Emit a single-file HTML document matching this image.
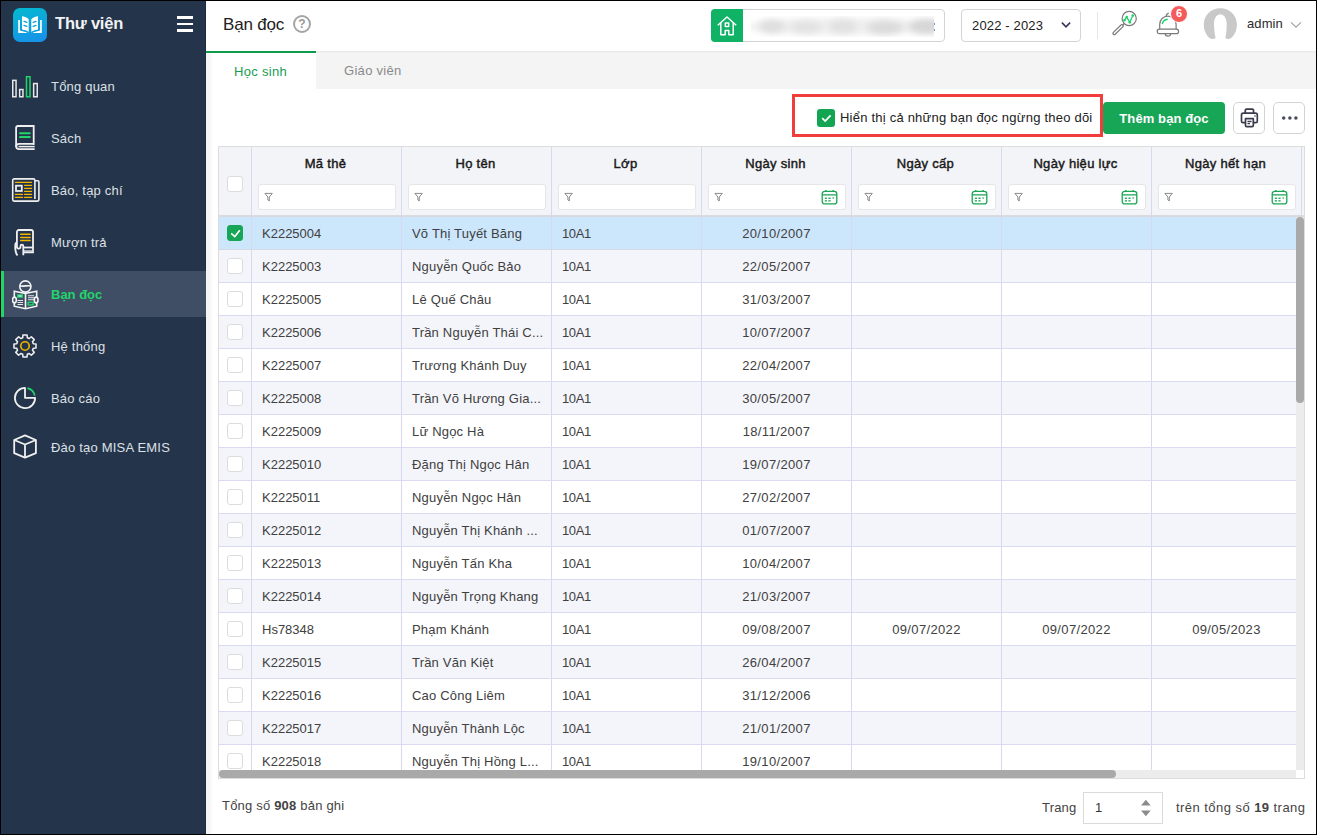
<!DOCTYPE html>
<html><head><meta charset="utf-8">
<style>
*{box-sizing:border-box;margin:0;padding:0}
html,body{width:1317px;height:835px;overflow:hidden;background:#000;font-family:"Liberation Sans",sans-serif;}
#app{position:absolute;left:1px;top:1px;width:1315px;height:833px;background:#fff;overflow:hidden}
.abs{position:absolute}
svg{display:block}
/* sidebar */
#side{position:absolute;left:0;top:0;width:205px;height:833px;background:#24344b;border-right:1px solid #1d2b46}
#shadow{position:absolute;left:205px;top:52px;width:7px;height:783px;background:linear-gradient(90deg,#f6f6f2 0%,#f3f3f3 30%,#fafafa 70%,rgba(255,255,255,0) 100%)}
#logo{position:absolute;left:12px;top:7px;width:34px;height:34px;border-radius:7px;background:linear-gradient(165deg,#03bace 0%,#0ea6dc 45%,#1790ea 100%)}
#brand{position:absolute;left:54px;top:13px;color:#f2f2f2;font-weight:700;font-size:16.5px;letter-spacing:-0.2px}
.ham{position:absolute;left:176px;width:16px;height:2.6px;background:#fff}
.mi{position:absolute;left:0;width:205px;height:46px}
.mi .t{position:absolute;left:50px;top:15px;font-size:13px;color:#dde0e5;white-space:nowrap;letter-spacing:0.2px}
.mi svg{position:absolute;left:10px;top:8px}
.mi.act{background:#3f4e64}
.mi.act:before{content:"";position:absolute;left:0;top:0;width:3px;height:46px;background:#1fd86a}
.mi.act .t{color:#22d46b;font-weight:700;letter-spacing:0;top:16px}
/* header */
#hdr{position:absolute;left:205px;top:0;width:1110px;height:50px;background:#fff}
#title{position:absolute;left:17px;top:14px;font-size:17px;color:#212121;letter-spacing:-0.2px}
#help{position:absolute;left:87px;top:14px;width:18px;height:18px;border:2px solid #a5a5a5;border-radius:50%;color:#999;font-size:12px;font-weight:700;text-align:center;line-height:14px}
#school{position:absolute;left:505px;top:8px;width:234px;height:33px;border:1px solid #d4d4d4;border-radius:4px;background:#fff}
#school .g{position:absolute;left:-1px;top:-1px;width:32px;height:33px;background:#10b266;border-radius:4px 0 0 4px}
#school .blurwrap{position:absolute;left:39px;top:6px;width:183px;height:21px;overflow:hidden}
#school .blurwrap i{position:absolute;display:block;background:#dedede;border-radius:50%;filter:blur(3px)}
#year{position:absolute;left:755px;top:8px;width:120px;height:33px;border:1px solid #d4d4d4;border-radius:4px;font-size:13px;color:#212121}
#year span{position:absolute;left:10px;top:8px;letter-spacing:0.15px}
#divd{position:absolute;left:891px;top:11px;width:1px;height:27px;background:#e6e6e6}
/* tabs */
#tabs{position:absolute;left:205px;top:50px;width:1110px;height:38px;background:#f4f4f4;box-shadow:inset 0 2px 2px -1px rgba(0,0,0,0.06)}
#tabAct{position:absolute;left:0;top:0;width:110px;height:38px;background:#fff;border-top:2px solid #0d9a4a}
#tabAct span{position:absolute;left:28px;top:11px;font-size:13px;color:#189c54;letter-spacing:0.3px}
#tabG{position:absolute;left:138px;top:12px;font-size:13px;color:#8a8a8a;letter-spacing:0.3px}
/* toolbar */
#redbox{position:absolute;left:791px;top:93px;width:311px;height:43px;border:3px solid #f23d3d}
#chk{position:absolute;left:816px;top:108px;width:18px;height:18px;background:#14a552;border-radius:3px}
#chkT{position:absolute;left:839px;top:109px;font-size:13px;color:#222;letter-spacing:0.22px;white-space:nowrap}
#addBtn{position:absolute;left:1102px;top:101px;width:122px;height:32px;background:#17a556;border-radius:4px;color:#fff;font-weight:700;font-size:13px;text-align:center;line-height:33px;letter-spacing:0.1px}
.ibtn{position:absolute;top:101px;width:32px;height:32px;border:1px solid #d3d3d3;border-radius:5px;background:#fff}
/* table */
#tbl{position:absolute;left:217px;top:145px;width:1087px;height:633px;border:1px solid #dcdcdc;overflow:hidden;background:#fff}
.th{position:absolute;top:0;height:68px;background:#f3f4f8;border-right:1px solid #d8d8ee}
.th .h{position:absolute;left:0;right:2px;top:9px;text-align:center;font-weight:400;font-size:13px;color:#1a1a1a;letter-spacing:0.3px;-webkit-text-stroke:0.45px #1a1a1a}
.th .f{position:absolute;left:6px;right:5px;top:37px;height:26px;background:#fff;border:1px solid #e6e6ea;border-radius:3px}
.th .f svg{position:absolute;left:5px;top:7px}
.th .f .cal{position:absolute;right:7px;left:auto;top:4px}
#hline{position:absolute;left:0;top:68px;width:1085px;height:2px;background:#d9d9e0}
.row{position:absolute;left:0;width:1085px;height:33px;border-bottom:1px solid #dadaf0}
.row.odd{background:#f4f5fa}
.row.sel{background:#cce6fc;border-bottom-color:#d2d9e3}
.c{position:absolute;top:0;height:32px;border-right:1px solid #d8d8ee;font-size:13px;color:#404040;line-height:34px;white-space:nowrap;overflow:hidden;letter-spacing:0.2px}
.c.code{letter-spacing:0}
.c.dt{letter-spacing:0.35px}
.cb{position:absolute;left:8px;top:8px;width:16px;height:16px;border:1px solid #dcdcdc;border-radius:3px;background:#fff}
.cb.on{background:#17a556;border-color:#17a556}
.ctr{text-align:center}
#vscroll{position:absolute;left:1077px;top:70px;width:8px;height:553px;background:#ececec}
#vthumb{position:absolute;left:1077px;top:70px;width:8px;height:186px;background:#a9a9a9;border-radius:4px}
#hscroll{position:absolute;left:0;top:623px;width:1077px;height:8px;background:#ececec}
#hthumb{position:absolute;left:0;top:623px;width:897px;height:8px;background:#a9a9a9;border-radius:4px}
#corner{position:absolute;left:1077px;top:623px;width:8px;height:8px;background:#fff}
/* footer */
#total{position:absolute;left:221px;top:797px;font-size:13px;color:#444;letter-spacing:0.2px}
#pg1{position:absolute;left:1041px;top:799px;font-size:13px;color:#444;letter-spacing:0.2px}
#pgInput{position:absolute;left:1082px;top:791px;width:80px;height:32px;border:1px solid #dadada;background:#fff}
#pgInput span{position:absolute;left:11px;top:7px;font-size:13px;color:#333}
#pg2{position:absolute;left:1175px;top:799px;font-size:13px;color:#444;letter-spacing:0.45px}
</style></head>
<body><div id="app">
<div id="side">
  <div id="logo">
    <svg width="34" height="34" viewBox="0 0 34 34"><g fill="#fff">
      <path d="M5.2 12 H6.9 V22.6 L15.7 23.9 V24.9 H5.2z"/>
      <path d="M28.8 12 H27.1 V22.6 L18.3 23.9 V24.9 H28.8z"/>
      <path d="M9 8.2 C11.5 8.5 14 9.5 15.7 11.2 V24 C14 22.6 11.5 21.8 9 21.7z"/>
      <path d="M25 8.2 C22.5 8.5 20 9.5 18.3 11.2 V24 C20 22.6 22.5 21.8 25 21.7z"/>
    </g><g stroke="#0b9fdb" stroke-width="1.25" stroke-linecap="round" fill="none">
      <path d="M7.6 20.2 Q7.7 22.4 10 22.6 Q13.3 23 15.3 24.8 M26.4 20.2 Q26.3 22.4 24 22.6 Q20.7 23 18.7 24.8"/>
      <path d="M11 13.4 l2.9 1 M11 17.4 l2.9 1 M23 13.4 l-2.9 1 M23 17.4 l-2.9 1"/></g></svg>
  </div>
  <div class="abs" style="left:200px;top:0;width:1px;height:833px;background:#283049"></div>
  <div id="brand">Thư viện</div>
  <div class="ham" style="top:15px"></div>
  <div class="ham" style="top:21.7px"></div>
  <div class="ham" style="top:28.3px"></div>

  <div class="mi" style="top:63px"><svg width="30" height="30" viewBox="0 0 30 30"><g fill="none" stroke-width="1.5"><rect x="1.75" y="8.35" width="3.3" height="16.4" stroke="#e8e8e8"/><rect x="8.65" y="17.55" width="3.3" height="7.2" stroke="#e8e8e8"/><rect x="15.5" y="4.75" width="3.5" height="20" stroke="#22d36b"/><rect x="22.65" y="11.55" width="3.6" height="13.2" stroke="#e8e8e8"/></g></svg><span class="t">Tổng quan</span></div>

  <div class="mi" style="top:115px"><svg width="30" height="30" viewBox="0 0 30 30"><g fill="none" stroke="#f0f0f0" stroke-width="1.8"><path d="M22.7 21 V2 H7.1 Q5.1 2 5.1 4 V22 Q5.1 25.1 8.2 25.1 H23.7"/><path d="M5.1 23 Q5.1 19.9 8.2 19.9 H22.7"/><path d="M7.5 22.6 H23.7" stroke-width="1.5"/></g><path d="M9 9.2 H18.8 M9 13 H18.8" stroke="#22d36b" stroke-width="2" stroke-linecap="round"/></svg><span class="t">Sách</span></div>

  <div class="mi" style="top:167px"><svg width="30" height="30" viewBox="0 0 30 30"><g fill="none" stroke="#eee" stroke-width="1.6"><path d="M23.9 23 V4.4 a1.5 1.5 0 0 0 -1.5 -1.5 H3.2 a1.5 1.5 0 0 0 -1.5 1.5 V23.6 a1.5 1.5 0 0 0 1.5 1.5 H26.4 a1.5 1.5 0 0 0 1.5 -1.5 V5.8 a1 1 0 0 0 -1 -1 H23.9"/><rect x="5" y="9.7" width="5.8" height="5.3" stroke-width="1.8"/></g><path d="M4.4 6.3 H20.5 M13.6 9.4 H20.5 M13.6 12.4 H20.5 M13.6 15.4 H20.5 M13.6 18.4 H20.5 M13.6 21.4 H20.5 M4.4 18.4 H11.4 M4.4 21.4 H11.4" stroke="#f2b600" stroke-width="1.3" stroke-linecap="round"/></svg><span class="t">Báo, tạp chí</span></div>

  <div class="mi" style="top:219px"><svg width="30" height="30" viewBox="0 0 30 30"><g fill="none" stroke="#f0f0f0" stroke-width="1.8"><path d="M5.9 15 V4 a2 2 0 0 1 2-2 H20 a2 2 0 0 1 2 2 V24.4 H12.3"/><path d="M12.3 19.5 H22"/><path d="M12.3 23 H22" stroke="#cfd2d8" stroke-width="1.6"/><path d="M5 14.5 Q3.8 16.5 4.4 22 Q4.9 25.5 6.5 27.5"/><path d="M5.9 15 V18.8 a1.8 1.8 0 0 0 3.6 0 V18 a1.4 1.4 0 0 1 2.8 0 V27.2"/></g><path d="M9.7 6.3 H19.1 M9.7 9.5 H19.1 M9.7 12.5 H19.1" stroke="#f2b600" stroke-width="1.6" stroke-linecap="round"/></svg><span class="t">Mượn trả</span></div>

  <div class="mi act" style="top:270px"><svg width="30" height="32" viewBox="0 0 30 32" style="top:7px;left:11px"><g fill="none" stroke="#f4f4f4" stroke-width="1.6"><circle cx="13.35" cy="8.5" r="5.6"/><path d="M7.9 7.6 C10.5 9.2 16 6.8 18.9 8"/><path d="M2.3 13.3 L13.5 15.5 L24.7 13.3 V28.2 L13.5 30.8 L2.3 28.2z" fill="#3f4e64"/><path d="M13.5 15.5 V30.8"/><ellipse cx="2.45" cy="22" rx="1.9" ry="2.9" fill="#3f4e64"/><ellipse cx="24.15" cy="22" rx="1.9" ry="2.9" fill="#3f4e64"/></g><rect x="5" y="16.3" width="6" height="3.4" fill="#22d36b"/><path d="M6.5 18 H9.5" stroke="#fff" stroke-width="0.9"/><rect x="16.2" y="24.3" width="5" height="2.6" fill="none" stroke="#22d36b" stroke-width="1.4"/><path d="M5.5 22.5 H11 M5.5 24.5 H11 M5.5 26.5 H11 M16 17.7 H22 M16 19.7 H22 M16 21.7 H22" stroke="#e6e6e6" stroke-width="1.1"/></svg><span class="t">Bạn đọc</span></div>

  <div class="mi" style="top:323px"><svg width="30" height="30" viewBox="0 0 30 30"><path fill="none" stroke="#f0f0f0" stroke-width="1.55" stroke-linejoin="round" d="M11.70 5.71 L11.96 2.99 L16.04 2.99 L16.30 5.71 L18.23 6.51 L20.34 4.77 L23.23 7.66 L21.49 9.77 L22.29 11.70 L25.01 11.96 L25.01 16.04 L22.29 16.30 L21.49 18.23 L23.23 20.34 L20.34 23.23 L18.23 21.49 L16.30 22.29 L16.04 25.01 L11.96 25.01 L11.70 22.29 L9.77 21.49 L7.66 23.23 L4.77 20.34 L6.51 18.23 L5.71 16.30 L2.99 16.04 L2.99 11.96 L5.71 11.70 L6.51 9.77 L4.77 7.66 L7.66 4.77 L9.77 6.51Z"/><circle cx="14" cy="14" r="4.2" fill="none" stroke="#f2b600" stroke-width="1.6"/></svg><span class="t">Hệ thống</span></div>

  <div class="mi" style="top:375px"><svg width="30" height="30" viewBox="0 0 30 30"><path fill="none" stroke="#f0f0f0" stroke-width="1.8" stroke-linejoin="round" d="M14 3.9 V13.8 H24.1 A10.1 10.1 0 1 1 14 3.9z"/><path fill="none" stroke="#22d36b" stroke-width="1.8" d="M16.4 4.2 A10 10 0 0 1 23.8 11.6"/></svg><span class="t">Báo cáo</span></div>

  <div class="mi" style="top:424px"><svg width="30" height="30" viewBox="0 0 30 30"><g fill="none" stroke="#f0f0f0" stroke-width="1.8" stroke-linejoin="round"><path d="M14 2.4 L24.9 7 V20.2 L14 24.6 L3.2 20.2 V7z"/><path d="M3.2 7 L14 11.5 L24.9 7 M14 11.5 V24.6"/></g></svg><span class="t">Đào tạo MISA EMIS</span></div>
</div>

<div id="hdr">
  <div id="title">Bạn đọc</div>
  <div id="help">?</div>
  <div id="school"><div class="g"><svg width="32" height="33" viewBox="0 0 32 33"><g fill="none" stroke="#fff" stroke-width="1.5" stroke-linejoin="round"><path d="M6.8 16.3 L16 8 L25.2 16.3"/><path d="M9.8 13.8 V25.8 H14.2 V21.5 H17.8 V25.8 H22.2 V13.8"/><rect x="14.3" y="14" width="3.4" height="3.4"/></g></svg></div>
    <div class="blurwrap"><i style="left:-6px;top:2px;width:200px;height:17px;background:#efefef"></i><i style="left:8px;top:4px;width:26px;height:13px"></i><i style="left:40px;top:5px;width:30px;height:12px;background:#e2e2e2"></i><i style="left:78px;top:4px;width:28px;height:13px;background:#e0e0e0"></i><i style="left:116px;top:5px;width:36px;height:13px;background:#dadada"></i><i style="left:158px;top:3px;width:36px;height:15px;background:#d6d6d6"></i></div>
    <div class="abs" style="left:222px;top:13px;width:1px;height:2px;background:#5a9fe6"></div><div class="abs" style="left:222px;top:19px;width:1px;height:2px;background:#5a9fe6"></div>
  </div>
  <div id="year"><span>2022 - 2023</span><svg class="abs" style="left:99px;top:11px" width="11" height="9" viewBox="0 0 11 9"><path d="M0.9 1.6 L5 5.8 L9.1 1.6" fill="none" stroke="#35365a" stroke-width="1.6"/></svg></div>
  <div id="divd"></div>
  <svg class="abs" style="left:906px;top:9px" width="30" height="28" viewBox="0 0 30 28"><circle cx="17.2" cy="8.5" r="7.1" fill="#fff" stroke="#7a7a7a" stroke-width="1.2"/><path d="M12.2 13.5 L10.6 15.1" stroke="#7a7a7a" stroke-width="1.3"/><path d="M2.3 23.3 L9.9 15.9" stroke="#7a7a7a" stroke-width="3.8" stroke-linecap="round"/><path d="M2.3 23.3 L9.9 15.9" stroke="#fff" stroke-width="1.4" stroke-linecap="round"/><path d="M12.4 10.2 L14.7 7.1 L17.8 12.3 L20.8 5.5" fill="none" stroke="#1ed26a" stroke-width="1.3"/><g fill="#1ed26a"><circle cx="12.4" cy="10.2" r="1.3"/><circle cx="14.7" cy="7.1" r="1.3"/><circle cx="17.8" cy="12.3" r="1.3"/><circle cx="20.8" cy="5.5" r="1.3"/></g></svg>
  <svg class="abs" style="left:950px;top:9px" width="26" height="30" viewBox="0 0 26 30"><g fill="none" stroke="#7a7a7a" stroke-width="1.2"><path d="M10.2 6.2 C10.2 4.6 11.2 3.2 12.8 3.4"/><path d="M3.7 19.3 V14.3 A8.2 8.2 0 0 1 20.1 14.3 V19.3"/><rect x="1.2" y="19.2" width="21.4" height="4.4" rx="2.2" fill="#fff"/><path d="M9.2 23.8 a2.75 2.3 0 0 0 5.5 0"/></g><path d="M6.2 14 A6.5 6.5 0 0 1 11.7 9.2" fill="none" stroke="#1ed26a" stroke-width="1.4"/></svg>
  <div class="abs" style="left:964px;top:4px;width:18px;height:18px;border-radius:50%;background:#f55b5b;border:1.5px solid #fff;color:#fff;font-size:11px;font-weight:700;text-align:center;line-height:15px">6</div>
  <svg class="abs" style="left:997px;top:7px" width="35" height="32" viewBox="0 0 35 32"><path fill="#c9c9c9" d="M6.5 30 C3 27 0.8 22 0.8 16.5 C0.8 7.5 8 0.3 17.35 0.3 C26.7 0.3 33.9 7.5 33.9 16.5 C33.9 22 31.7 27 28.2 30 Q25 31.8 22.3 30 C23 27 23.7 22 23.7 16 C23.7 10 20.8 6.3 17.35 6.3 C13.9 6.3 11 10 11 16 C11 22 12 27 12.6 30 Q9.5 31.8 6.5 30 Z"/></svg>
  <div class="abs" style="left:1041px;top:15px;font-size:13px;color:#2a2a2a;letter-spacing:0.1px">admin</div>
  <svg class="abs" style="left:1084px;top:20px" width="12" height="8" viewBox="0 0 12 8"><path d="M1 1.3 L6 6.2 L11 1.3" fill="none" stroke="#a0a0a0" stroke-width="1.1"/></svg>
</div>

<div id="tabs">
  <div id="tabAct"><span>Học sinh</span></div>
  <div id="tabG">Giáo viên</div>
</div>

<div id="shadow"></div>
<div id="redbox"></div>
<div id="chk"><svg width="18" height="18" viewBox="0 0 18 18"><path d="M5.2 9.2 L8.2 12 L13.6 6.3" fill="none" stroke="#fff" stroke-width="1.7"/></svg></div>
<div id="chkT">Hiển thị cả những bạn đọc ngừng theo dõi</div>
<div id="addBtn">Thêm bạn đọc</div>
<div class="ibtn" style="left:1232px"><svg width="30" height="30" viewBox="0 0 30 30"><g transform="translate(0,-1.3)"><g fill="none" stroke="#3a3b4d" stroke-width="1.7" stroke-linejoin="round"><path d="M11.3 11.5 V8.6 a1.2 1.2 0 0 1 1.2 -1.2 H18.3 a1.2 1.2 0 0 1 1.2 1.2 V11.5"/><path d="M11 21 H9 a1.5 1.5 0 0 1 -1.5 -1.5 V13.3 a1.8 1.8 0 0 1 1.8 -1.8 H21.5 a1.8 1.8 0 0 1 1.8 1.8 V19.5 a1.5 1.5 0 0 1 -1.5 1.5 H19.8"/><path d="M11.5 17 H19.3 V23.8 a1.2 1.2 0 0 1 -1.2 1.2 H12.7 a1.2 1.2 0 0 1 -1.2 -1.2z"/></g><path d="M13.5 19.8 H17.5 M13.5 22 H16" stroke="#3a3b4d" stroke-width="1.3"/><circle cx="21" cy="14.3" r="0.8" fill="#3a3b4d"/></g></svg></div>
<div class="ibtn" style="left:1272px"><svg width="30" height="30" viewBox="0 0 30 30"><g fill="#484a5e"><circle cx="9.7" cy="15" r="1.75"/><circle cx="15.9" cy="15" r="1.75"/><circle cx="21.9" cy="15" r="1.75"/></g></svg></div>

<div id="tbl">
  <div id="THEAD"><div class="th" style="left:0;width:33px"><div class="cb" style="top:29px;left:8px"></div></div>
<div class="th" style="left:33px;width:150px"><div class="h">Mã thẻ</div><div class="f"><svg width="10" height="10" viewBox="0 0 10 10"><path d="M0.9 1.4 H8.3 L5.3 5 V8.9 L3.9 8 V5z" fill="none" stroke="#8a8a8a" stroke-width="1" stroke-linejoin="round"/></svg></div></div>
<div class="th" style="left:183px;width:150px"><div class="h">Họ tên</div><div class="f"><svg width="10" height="10" viewBox="0 0 10 10"><path d="M0.9 1.4 H8.3 L5.3 5 V8.9 L3.9 8 V5z" fill="none" stroke="#8a8a8a" stroke-width="1" stroke-linejoin="round"/></svg></div></div>
<div class="th" style="left:333px;width:150px"><div class="h">Lớp</div><div class="f"><svg width="10" height="10" viewBox="0 0 10 10"><path d="M0.9 1.4 H8.3 L5.3 5 V8.9 L3.9 8 V5z" fill="none" stroke="#8a8a8a" stroke-width="1" stroke-linejoin="round"/></svg></div></div>
<div class="th" style="left:483px;width:150px"><div class="h">Ngày sinh</div><div class="f"><svg width="10" height="10" viewBox="0 0 10 10"><path d="M0.9 1.4 H8.3 L5.3 5 V8.9 L3.9 8 V5z" fill="none" stroke="#8a8a8a" stroke-width="1" stroke-linejoin="round"/></svg><svg class="cal" width="17" height="16" viewBox="0 0 17 16"><g fill="none" stroke="#19a554" stroke-width="1.3"><rect x="1.2" y="2.3" width="14.6" height="12.6" rx="2.5"/><path d="M1.2 5.8 H15.8 M4.8 1 V3 M12.2 1 V3"/></g><g fill="#19a554"><rect x="3.8" y="8.6" width="2.2" height="1.3"/><rect x="7.4" y="8.6" width="2.2" height="1.3"/><rect x="3.8" y="11.2" width="2.2" height="1.3"/><rect x="7.4" y="11.2" width="2.2" height="1.3"/><path d="M11 8.6 H13.4 L12.2 9.9z"/></g></svg></div></div>
<div class="th" style="left:633px;width:150px"><div class="h">Ngày cấp</div><div class="f"><svg width="10" height="10" viewBox="0 0 10 10"><path d="M0.9 1.4 H8.3 L5.3 5 V8.9 L3.9 8 V5z" fill="none" stroke="#8a8a8a" stroke-width="1" stroke-linejoin="round"/></svg><svg class="cal" width="17" height="16" viewBox="0 0 17 16"><g fill="none" stroke="#19a554" stroke-width="1.3"><rect x="1.2" y="2.3" width="14.6" height="12.6" rx="2.5"/><path d="M1.2 5.8 H15.8 M4.8 1 V3 M12.2 1 V3"/></g><g fill="#19a554"><rect x="3.8" y="8.6" width="2.2" height="1.3"/><rect x="7.4" y="8.6" width="2.2" height="1.3"/><rect x="3.8" y="11.2" width="2.2" height="1.3"/><rect x="7.4" y="11.2" width="2.2" height="1.3"/><path d="M11 8.6 H13.4 L12.2 9.9z"/></g></svg></div></div>
<div class="th" style="left:783px;width:150px"><div class="h">Ngày hiệu lực</div><div class="f"><svg width="10" height="10" viewBox="0 0 10 10"><path d="M0.9 1.4 H8.3 L5.3 5 V8.9 L3.9 8 V5z" fill="none" stroke="#8a8a8a" stroke-width="1" stroke-linejoin="round"/></svg><svg class="cal" width="17" height="16" viewBox="0 0 17 16"><g fill="none" stroke="#19a554" stroke-width="1.3"><rect x="1.2" y="2.3" width="14.6" height="12.6" rx="2.5"/><path d="M1.2 5.8 H15.8 M4.8 1 V3 M12.2 1 V3"/></g><g fill="#19a554"><rect x="3.8" y="8.6" width="2.2" height="1.3"/><rect x="7.4" y="8.6" width="2.2" height="1.3"/><rect x="3.8" y="11.2" width="2.2" height="1.3"/><rect x="7.4" y="11.2" width="2.2" height="1.3"/><path d="M11 8.6 H13.4 L12.2 9.9z"/></g></svg></div></div>
<div class="th" style="left:933px;width:150px"><div class="h">Ngày hết hạn</div><div class="f"><svg width="10" height="10" viewBox="0 0 10 10"><path d="M0.9 1.4 H8.3 L5.3 5 V8.9 L3.9 8 V5z" fill="none" stroke="#8a8a8a" stroke-width="1" stroke-linejoin="round"/></svg><svg class="cal" width="17" height="16" viewBox="0 0 17 16"><g fill="none" stroke="#19a554" stroke-width="1.3"><rect x="1.2" y="2.3" width="14.6" height="12.6" rx="2.5"/><path d="M1.2 5.8 H15.8 M4.8 1 V3 M12.2 1 V3"/></g><g fill="#19a554"><rect x="3.8" y="8.6" width="2.2" height="1.3"/><rect x="7.4" y="8.6" width="2.2" height="1.3"/><rect x="3.8" y="11.2" width="2.2" height="1.3"/><rect x="7.4" y="11.2" width="2.2" height="1.3"/><path d="M11 8.6 H13.4 L12.2 9.9z"/></g></svg></div></div>
<div class="th" style="left:1083px;width:2px;border:0"></div>
<div id="hline"></div></div><!--/THEAD-->
  <div id="TBODY"><div class="row sel" style="top:70px"><div class="c" style="left:0;width:33px"><div class="cb on"><svg width="14" height="14" viewBox="0 0 14 14" style="position:absolute;left:0;top:0"><path d="M3.2 7.4 L6.8 10.6 L11.8 4.3" fill="none" stroke="#fff" stroke-width="1.6"/></svg></div></div><div class="c code" style="left:33px;width:150px;padding-left:10px">K2225004</div><div class="c" style="left:183px;width:150px;padding-left:10px">Võ Thị Tuyết Băng</div><div class="c" style="left:333px;width:150px;padding-left:10px;letter-spacing:-0.4px">10A1</div><div class="c ctr dt" style="left:483px;width:150px">20/10/2007</div><div class="c ctr dt" style="left:633px;width:150px"></div><div class="c ctr dt" style="left:783px;width:150px"></div><div class="c ctr dt" style="left:933px;width:150px"></div></div>
<div class="row odd" style="top:103px"><div class="c" style="left:0;width:33px"><div class="cb"></div></div><div class="c code" style="left:33px;width:150px;padding-left:10px">K2225003</div><div class="c" style="left:183px;width:150px;padding-left:10px">Nguyễn Quốc Bảo</div><div class="c" style="left:333px;width:150px;padding-left:10px;letter-spacing:-0.4px">10A1</div><div class="c ctr dt" style="left:483px;width:150px">22/05/2007</div><div class="c ctr dt" style="left:633px;width:150px"></div><div class="c ctr dt" style="left:783px;width:150px"></div><div class="c ctr dt" style="left:933px;width:150px"></div></div>
<div class="row" style="top:136px"><div class="c" style="left:0;width:33px"><div class="cb"></div></div><div class="c code" style="left:33px;width:150px;padding-left:10px">K2225005</div><div class="c" style="left:183px;width:150px;padding-left:10px">Lê Quế Châu</div><div class="c" style="left:333px;width:150px;padding-left:10px;letter-spacing:-0.4px">10A1</div><div class="c ctr dt" style="left:483px;width:150px">31/03/2007</div><div class="c ctr dt" style="left:633px;width:150px"></div><div class="c ctr dt" style="left:783px;width:150px"></div><div class="c ctr dt" style="left:933px;width:150px"></div></div>
<div class="row odd" style="top:169px"><div class="c" style="left:0;width:33px"><div class="cb"></div></div><div class="c code" style="left:33px;width:150px;padding-left:10px">K2225006</div><div class="c" style="left:183px;width:150px;padding-left:10px">Trần Nguyễn Thái C...</div><div class="c" style="left:333px;width:150px;padding-left:10px;letter-spacing:-0.4px">10A1</div><div class="c ctr dt" style="left:483px;width:150px">10/07/2007</div><div class="c ctr dt" style="left:633px;width:150px"></div><div class="c ctr dt" style="left:783px;width:150px"></div><div class="c ctr dt" style="left:933px;width:150px"></div></div>
<div class="row" style="top:202px"><div class="c" style="left:0;width:33px"><div class="cb"></div></div><div class="c code" style="left:33px;width:150px;padding-left:10px">K2225007</div><div class="c" style="left:183px;width:150px;padding-left:10px">Trương Khánh Duy</div><div class="c" style="left:333px;width:150px;padding-left:10px;letter-spacing:-0.4px">10A1</div><div class="c ctr dt" style="left:483px;width:150px">22/04/2007</div><div class="c ctr dt" style="left:633px;width:150px"></div><div class="c ctr dt" style="left:783px;width:150px"></div><div class="c ctr dt" style="left:933px;width:150px"></div></div>
<div class="row odd" style="top:235px"><div class="c" style="left:0;width:33px"><div class="cb"></div></div><div class="c code" style="left:33px;width:150px;padding-left:10px">K2225008</div><div class="c" style="left:183px;width:150px;padding-left:10px">Trần Võ Hương Gia...</div><div class="c" style="left:333px;width:150px;padding-left:10px;letter-spacing:-0.4px">10A1</div><div class="c ctr dt" style="left:483px;width:150px">30/05/2007</div><div class="c ctr dt" style="left:633px;width:150px"></div><div class="c ctr dt" style="left:783px;width:150px"></div><div class="c ctr dt" style="left:933px;width:150px"></div></div>
<div class="row" style="top:268px"><div class="c" style="left:0;width:33px"><div class="cb"></div></div><div class="c code" style="left:33px;width:150px;padding-left:10px">K2225009</div><div class="c" style="left:183px;width:150px;padding-left:10px">Lữ Ngọc Hà</div><div class="c" style="left:333px;width:150px;padding-left:10px;letter-spacing:-0.4px">10A1</div><div class="c ctr dt" style="left:483px;width:150px">18/11/2007</div><div class="c ctr dt" style="left:633px;width:150px"></div><div class="c ctr dt" style="left:783px;width:150px"></div><div class="c ctr dt" style="left:933px;width:150px"></div></div>
<div class="row odd" style="top:301px"><div class="c" style="left:0;width:33px"><div class="cb"></div></div><div class="c code" style="left:33px;width:150px;padding-left:10px">K2225010</div><div class="c" style="left:183px;width:150px;padding-left:10px">Đặng Thị Ngọc Hân</div><div class="c" style="left:333px;width:150px;padding-left:10px;letter-spacing:-0.4px">10A1</div><div class="c ctr dt" style="left:483px;width:150px">19/07/2007</div><div class="c ctr dt" style="left:633px;width:150px"></div><div class="c ctr dt" style="left:783px;width:150px"></div><div class="c ctr dt" style="left:933px;width:150px"></div></div>
<div class="row" style="top:334px"><div class="c" style="left:0;width:33px"><div class="cb"></div></div><div class="c code" style="left:33px;width:150px;padding-left:10px">K2225011</div><div class="c" style="left:183px;width:150px;padding-left:10px">Nguyễn Ngọc Hân</div><div class="c" style="left:333px;width:150px;padding-left:10px;letter-spacing:-0.4px">10A1</div><div class="c ctr dt" style="left:483px;width:150px">27/02/2007</div><div class="c ctr dt" style="left:633px;width:150px"></div><div class="c ctr dt" style="left:783px;width:150px"></div><div class="c ctr dt" style="left:933px;width:150px"></div></div>
<div class="row odd" style="top:367px"><div class="c" style="left:0;width:33px"><div class="cb"></div></div><div class="c code" style="left:33px;width:150px;padding-left:10px">K2225012</div><div class="c" style="left:183px;width:150px;padding-left:10px">Nguyễn Thị Khánh ...</div><div class="c" style="left:333px;width:150px;padding-left:10px;letter-spacing:-0.4px">10A1</div><div class="c ctr dt" style="left:483px;width:150px">01/07/2007</div><div class="c ctr dt" style="left:633px;width:150px"></div><div class="c ctr dt" style="left:783px;width:150px"></div><div class="c ctr dt" style="left:933px;width:150px"></div></div>
<div class="row" style="top:400px"><div class="c" style="left:0;width:33px"><div class="cb"></div></div><div class="c code" style="left:33px;width:150px;padding-left:10px">K2225013</div><div class="c" style="left:183px;width:150px;padding-left:10px">Nguyễn Tấn Kha</div><div class="c" style="left:333px;width:150px;padding-left:10px;letter-spacing:-0.4px">10A1</div><div class="c ctr dt" style="left:483px;width:150px">10/04/2007</div><div class="c ctr dt" style="left:633px;width:150px"></div><div class="c ctr dt" style="left:783px;width:150px"></div><div class="c ctr dt" style="left:933px;width:150px"></div></div>
<div class="row odd" style="top:433px"><div class="c" style="left:0;width:33px"><div class="cb"></div></div><div class="c code" style="left:33px;width:150px;padding-left:10px">K2225014</div><div class="c" style="left:183px;width:150px;padding-left:10px">Nguyễn Trọng Khang</div><div class="c" style="left:333px;width:150px;padding-left:10px;letter-spacing:-0.4px">10A1</div><div class="c ctr dt" style="left:483px;width:150px">21/03/2007</div><div class="c ctr dt" style="left:633px;width:150px"></div><div class="c ctr dt" style="left:783px;width:150px"></div><div class="c ctr dt" style="left:933px;width:150px"></div></div>
<div class="row" style="top:466px"><div class="c" style="left:0;width:33px"><div class="cb"></div></div><div class="c code" style="left:33px;width:150px;padding-left:10px">Hs78348</div><div class="c" style="left:183px;width:150px;padding-left:10px">Phạm Khánh</div><div class="c" style="left:333px;width:150px;padding-left:10px;letter-spacing:-0.4px">10A1</div><div class="c ctr dt" style="left:483px;width:150px">09/08/2007</div><div class="c ctr dt" style="left:633px;width:150px">09/07/2022</div><div class="c ctr dt" style="left:783px;width:150px">09/07/2022</div><div class="c ctr dt" style="left:933px;width:150px">09/05/2023</div></div>
<div class="row odd" style="top:499px"><div class="c" style="left:0;width:33px"><div class="cb"></div></div><div class="c code" style="left:33px;width:150px;padding-left:10px">K2225015</div><div class="c" style="left:183px;width:150px;padding-left:10px">Trần Văn Kiệt</div><div class="c" style="left:333px;width:150px;padding-left:10px;letter-spacing:-0.4px">10A1</div><div class="c ctr dt" style="left:483px;width:150px">26/04/2007</div><div class="c ctr dt" style="left:633px;width:150px"></div><div class="c ctr dt" style="left:783px;width:150px"></div><div class="c ctr dt" style="left:933px;width:150px"></div></div>
<div class="row" style="top:532px"><div class="c" style="left:0;width:33px"><div class="cb"></div></div><div class="c code" style="left:33px;width:150px;padding-left:10px">K2225016</div><div class="c" style="left:183px;width:150px;padding-left:10px">Cao Công Liêm</div><div class="c" style="left:333px;width:150px;padding-left:10px;letter-spacing:-0.4px">10A1</div><div class="c ctr dt" style="left:483px;width:150px">31/12/2006</div><div class="c ctr dt" style="left:633px;width:150px"></div><div class="c ctr dt" style="left:783px;width:150px"></div><div class="c ctr dt" style="left:933px;width:150px"></div></div>
<div class="row odd" style="top:565px"><div class="c" style="left:0;width:33px"><div class="cb"></div></div><div class="c code" style="left:33px;width:150px;padding-left:10px">K2225017</div><div class="c" style="left:183px;width:150px;padding-left:10px">Nguyễn Thành Lộc</div><div class="c" style="left:333px;width:150px;padding-left:10px;letter-spacing:-0.4px">10A1</div><div class="c ctr dt" style="left:483px;width:150px">21/01/2007</div><div class="c ctr dt" style="left:633px;width:150px"></div><div class="c ctr dt" style="left:783px;width:150px"></div><div class="c ctr dt" style="left:933px;width:150px"></div></div>
<div class="row" style="top:598px"><div class="c" style="left:0;width:33px"><div class="cb"></div></div><div class="c code" style="left:33px;width:150px;padding-left:10px">K2225018</div><div class="c" style="left:183px;width:150px;padding-left:10px">Nguyễn Thị Hồng L...</div><div class="c" style="left:333px;width:150px;padding-left:10px;letter-spacing:-0.4px">10A1</div><div class="c ctr dt" style="left:483px;width:150px">19/10/2007</div><div class="c ctr dt" style="left:633px;width:150px"></div><div class="c ctr dt" style="left:783px;width:150px"></div><div class="c ctr dt" style="left:933px;width:150px"></div></div></div><!--/TBODY-->
  <div id="vscroll"></div><div id="vthumb"></div>
  <div id="hscroll"></div><div id="hthumb"></div><div id="corner"></div>
</div>

<div id="total">Tổng số <b>908</b> bản ghi</div>
<div id="pg1">Trang</div>
<div id="pgInput"><span>1</span><svg class="abs" style="left:57px;top:6px" width="11" height="19" viewBox="0 0 11 19"><path d="M0 6.5 L4.85 0.8 L9.7 6.5z M0 11.6 L4.85 17.3 L9.7 11.6z" fill="#8c8c8c"/></svg></div>
<div id="pg2">trên tổng số <b>19</b> trang</div>
</div></body></html>
